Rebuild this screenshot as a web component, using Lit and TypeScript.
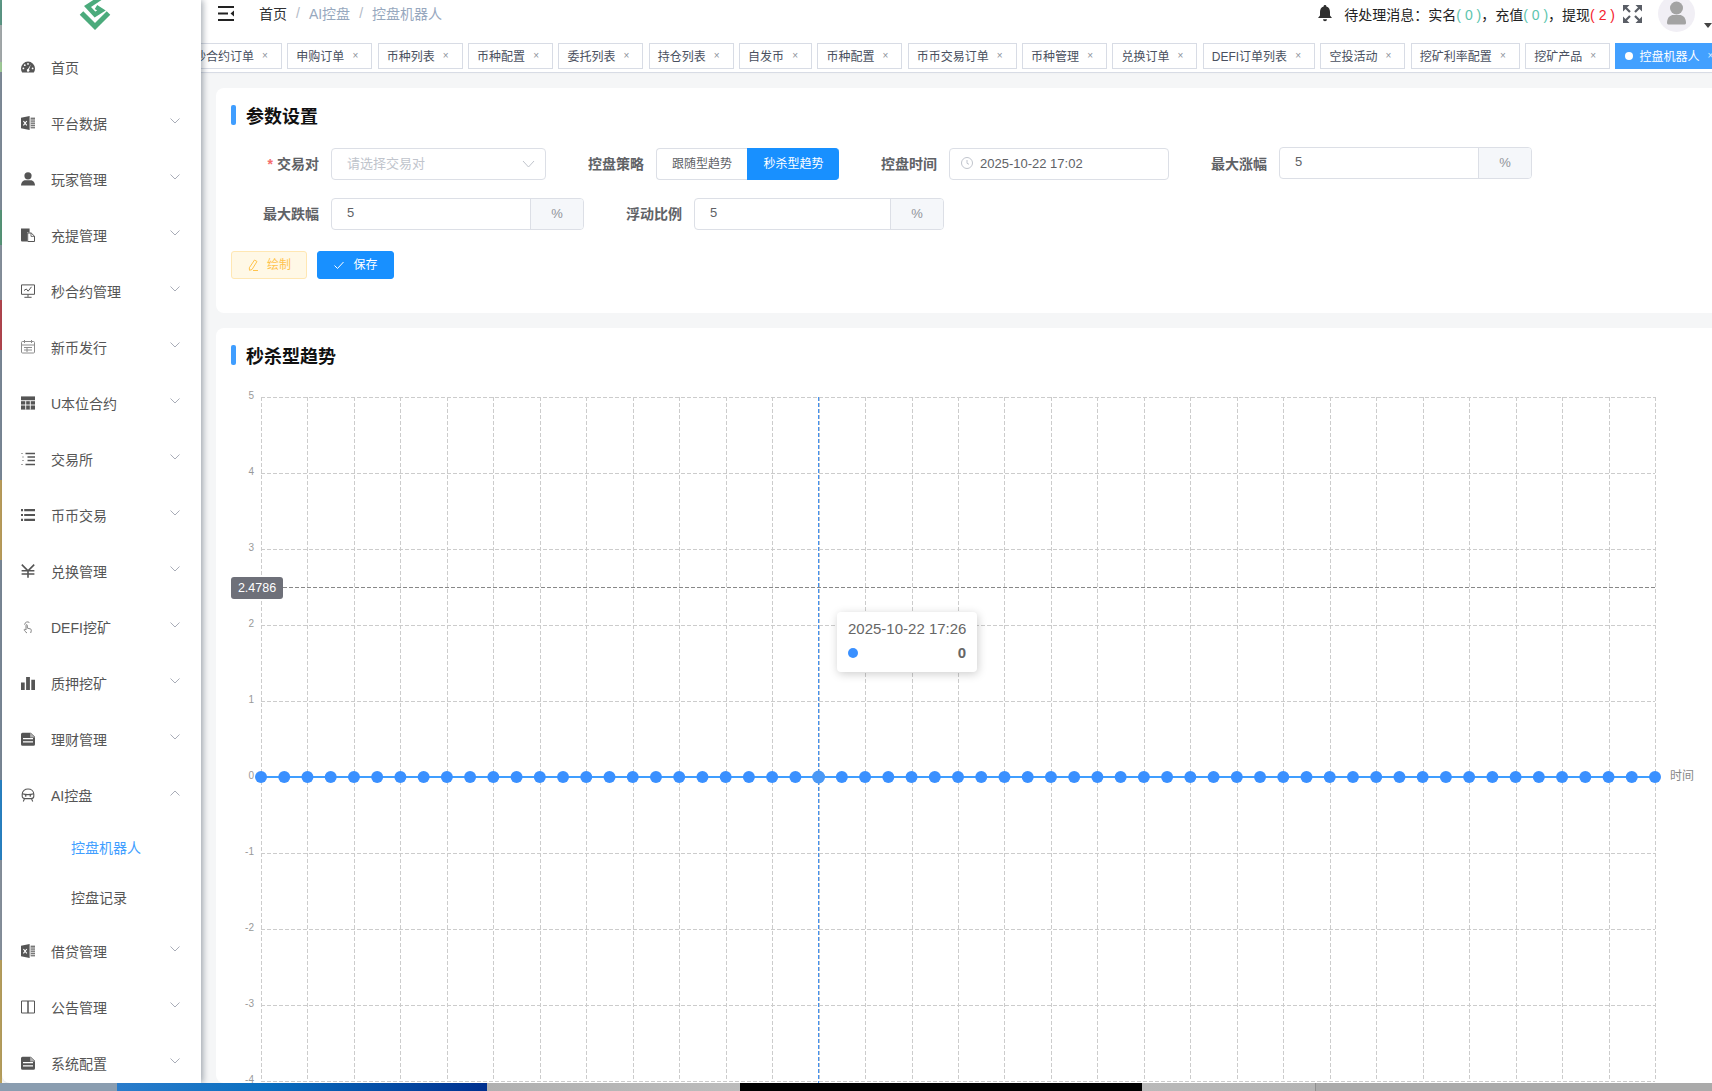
import { LitElement, html, css, svg } from "lit";
import { customElement } from "lit/decorators.js";

const ICONS: Record<string, unknown> = {
  gauge: svg`<path d="M7 1.600a7 7 0 0 0-7 7c0 1.500.4 2.900 1.200 4h11.600c.8-1.100 1.200-2.500 1.200-4a7 7 0 0 0-7-7z"/><g fill="#fff"><circle cx="2.400" cy="8.400" r=".9"/><circle cx="3.800" cy="5.200" r=".9"/><circle cx="7" cy="3.900" r=".9"/><circle cx="11.600" cy="8.400" r=".9"/><path d="M9.900 4.600 8 9.400a1.300 1.300 0 1 1-1.100-.3z"/></g>`,
  excel: svg`<path d="M0 1.800 8.600 0v14L0 12.200z"/><path d="m2.400 5 3.400 4.400M5.800 5 2.400 9.400" stroke="#fff" stroke-width="1.100" fill="none"/><path d="M9.600 1.600H14v10.800H9.600z" fill="#777"/><path d="M9.600 4h4.400M9.600 6.200h4.400M9.600 8.400h4.400M9.600 10.600h4.400" stroke="#fff" stroke-width=".7"/>`,
  user: svg`<circle cx="7" cy="3.800" r="3.600"/><path d="M0 13.600c0-3.600 2.600-5.400 4.400-5.400h5.200c1.800 0 4.400 1.800 4.400 5.400z"/>`,
  copy: svg`<path d="M0 .4h8.600v4H6v9H1a1 1 0 0 1-1-1z"/><path d="M6.700 5h3.500l3.300 3.200v5.300H6.700z" fill="#fff" stroke="#555"/><path d="M10 5v3.400h3.500" fill="none" stroke="#555" stroke-width=".8"/>`,
  monitor: svg`<g fill="none" stroke="#555"><path d="M.5.900h13v9.400H.5z"/><path d="m3 6.500 2.300-1.500 1.800 2.200 3.400-4.400M7 10.500v2.400M3.400 13.300h7.200"/></g>`,
  calendar: svg`<g fill="none" stroke="#8c8c8c"><rect x=".5" y="1.500" width="13" height="11.500" rx="1"/><path d="M.5 5h13M3.500 0v3M10.500 0v3M3 7.500h8M3 10h8M6 7v5"/></g>`,
  table: svg`<path d="M0 .4h14v13.200H0z"/><path d="M0 4.700h14M0 9h14M4.700 4.700v9M9.300 4.700v9" stroke="#fff" stroke-width=".9"/>`,
  indent: svg`<g fill="none" stroke="#555"><path d="M4.500 1.500H14M6.500 5h7.500M6.500 8.500h7.500M4.500 12.500H14" stroke-width="1.300"/><path d="M.5 1.500h1.500M1.500 5h2M1.500 8.500h2M.5 12.500h1.500" stroke-dasharray="1 1"/></g>`,
  list: svg`<path d="M0 1h2v2.200H0zM0 5.900h2v2.200H0zM0 10.800h2V13H0zM3.200 1H14v2.200H3.200zM3.200 5.900H14v2.200H3.200zM3.200 10.800H14V13H3.200z"/>`,
  yen: svg`<path d="M.8.600 7 6.800 13.200.600M.6 6.800h12.800M.6 10h12.800M7 6.800v7" fill="none" stroke="#555" stroke-width="1.600"/>`,
  hand: svg`<path d="M6 13c-1.400-1-3-2.600-2.800-3.300.2-.8 1.300-.2 1.800.3V5.400c0-1 1.300-1 1.300 0v2.700l3.300.9c.8.3.8 1.200.6 2l-.5 2M3.600 4.700a3 3 0 0 1 4.800-2.200" fill="none" stroke="#777" stroke-width=".9"/>`,
  bars: svg`<path d="M0 6.500h3.700V14H0zM5.100 1h3.800v13H5.100zM10.300 3.800H14V14h-3.700z"/>`,
  doc: svg`<path d="M1.500.800h8.300L14 4.800v7.400a1.500 1.500 0 0 1-1.500 1.500h-11A1.500 1.500 0 0 1 0 12.200V2.300A1.500 1.500 0 0 1 1.500.800z"/><path d="M2 6.600h10M2 9.800h10" stroke="#fff" stroke-width="1.200"/><path d="M9.200.800 14 5.400H9.200z" fill="#fff" opacity=".55"/>`,
  robot: svg`<g fill="none" stroke="#555" stroke-width="1.100"><path d="M1.200 6.300C1.200 2.800 4 1 7 1s5.800 1.800 5.800 5.300v2c0 1.600-1.500 2.300-2.800 2.300H4c-1.300 0-2.800-.7-2.800-2.300z"/><path d="M1.200 5.800c3.500 1 8.100 1 11.600 0M3.500 10.600 2.300 13.500M10.500 10.600l1.200 2.900"/></g><circle cx="4.700" cy="7.800" r=".9"/><circle cx="9.300" cy="7.800" r=".9"/>`,
  book: svg`<path d="M.5 1H7v12H.5zM7 1h6.500v12H7z" fill="none" stroke="#555"/>`,
};

const NAV = [
  { label: "首页", icon: "gauge", leaf: true },
  { label: "平台数据", icon: "excel" },
  { label: "玩家管理", icon: "user" },
  { label: "充提管理", icon: "copy" },
  { label: "秒合约管理", icon: "monitor" },
  { label: "新币发行", icon: "calendar" },
  { label: "U本位合约", icon: "table" },
  { label: "交易所", icon: "indent" },
  { label: "币币交易", icon: "list" },
  { label: "兑换管理", icon: "yen" },
  { label: "DEFI挖矿", icon: "hand" },
  { label: "质押挖矿", icon: "bars" },
  { label: "理财管理", icon: "doc" },
  { label: "AI控盘", icon: "robot", open: true },
  { label: "借贷管理", icon: "excel" },
  { label: "公告管理", icon: "book" },
  { label: "系统配置", icon: "doc" },
];

const TAGS = [
  "秒合约订单", "申购订单", "币种列表", "币种配置", "委托列表", "持仓列表", "自发币", "币种配置",
  "币币交易订单", "币种管理", "兑换订单", "DEFI订单列表", "空投活动", "挖矿利率配置", "挖矿产品",
];

// chart geometry, in page coordinates (the svg viewBox starts at the same place)
const X0 = 261;
const STEP = 1394 / 60;
const Y_ZERO = 777;
const UNIT = 76;
const xAt = (i: number) => X0 + i * STEP;
const yAt = (v: number) => Y_ZERO - v * UNIT;
const TICKS = [5, 4, 3, 2, 1, 0, -1, -2, -3, -4];
const HOVER = 24;

@customElement("app-root")
export class AppRoot extends LitElement {
  static styles = css`
    :host {
      display: block;
      width: 1712px;
      height: 1091px;
      overflow: hidden;
      font-family: "Liberation Sans", "Noto Sans CJK SC", sans-serif;
      font-size: 14px;
      color: #555;
    }
    .window { display: flex; height: 1083px; overflow: hidden; }
    .edge {
      width: 2px;
      flex: none;
      background: linear-gradient(#5f9c88 0 25px, #aab0b0 25px 62px, #a6d29c 62px 72px, #84909c 72px 210px,
        #5a9a7a 210px 245px, #8b95a0 245px 300px, #b8474f 300px 350px, #7e8c9a 350px 480px,
        #c0a25c 480px 560px, #7e8c9a 560px 780px, #2a86c8 780px 860px, #8b95a0 860px 960px, #bda45e 960px 1083px);
    }
    .side {
      width: 199px;
      flex: none;
      background: #fff;
      border-bottom-left-radius: 8px;
      box-shadow: 2px 0 6px rgba(0, 21, 41, 0.35);
      position: relative;
      z-index: 2;
      overflow: hidden;
    }
    .logo { height: 39px; display: flex; justify-content: center; padding-right: 14px; box-sizing: border-box; }
    .item { height: 56px; display: flex; align-items: center; padding: 0 21px 0 19px; color: #555; }
    .item .ico { width: 14px; height: 14px; fill: #555; flex: none; margin-right: 16px; margin-top: -1px; }
    .item .name { flex: 1; white-space: nowrap; }
    .item .chev { width: 10px; height: 6px; flex: none; margin-top: -4px; fill: none; stroke: #a9adb8; stroke-width: 1; }
    .sub { height: 50px; line-height: 50px; padding-left: 69px; color: #555; }
    .sub.on { color: #409eff; }

    .main { flex: 1; min-width: 0; display: flex; flex-direction: column; background: #f5f6f7; overflow: hidden; }
    .head {
      height: 39px;
      flex: none;
      background: #fff;
      display: flex;
      align-items: center;
      position: relative;
      padding-left: 17px;
      padding-bottom: 11px;
      box-sizing: border-box;
      overflow: hidden;
    }
    .burger { width: 16px; height: 15px; flex: none; margin: -2px 25px 0 0; }
    .crumb { color: #97a8be; white-space: nowrap; margin-top: -2px; }
    .crumb.first { color: #303133; }
    .slash { color: #b3bac6; margin: -2px 9px 0; }
    .right { margin-left: auto; display: flex; align-items: center; padding-top: 3px; }
    .bell { width: 16px; height: 17px; fill: #2f2f2f; margin-right: 11px; margin-top: -5px; }
    .msg { color: #222; white-space: nowrap; margin-top: -4px; }
    .msg .ok { color: #5cc5ae; }
    .msg .bad { color: #f5222d; }
    .full { width: 19px; height: 18px; fill: #5a5e66; margin: -3px 0 0 8px; }
    .avatar {
      width: 37px;
      height: 37px;
      margin: -4px 17px 0 16px;
      display: block;
    }
    .caret {
      position: absolute;
      right: 0;
      top: 23px;
      width: 0;
      height: 0;
      border: 4px solid transparent;
      border-top: 5px solid #444;
      border-bottom: 0;
    }
    .tags {
      height: 34px;
      flex: none;
      background: #fff;
      border-bottom: 1px solid #d8dce5;
      box-shadow: 0 -1px 3px rgba(0, 0, 0, 0.08);
      display: flex;
      align-items: center;
      gap: 5.33px;
      overflow: hidden;
      box-sizing: border-box;
      padding-top: 1px;
    }
    .tag {
      height: 26px;
      flex: none;
      box-sizing: border-box;
      border: 1px solid #d8dce5;
      display: flex;
      align-items: center;
      padding: 0 8px 1px;
      font-size: 12px;
      color: #495060;
      white-space: nowrap;
      background: #fff;
    }
    .tag:first-child { margin-left: -16px; }
    .tag .x { width: 16px; margin-left: 3px; text-align: center; color: #8e939c; font-size: 10px; }
    .tag.on { background: #42a0ff; border-color: #42a0ff; color: #fff; padding-left: 9px; }
    .tag.on .dot { width: 8px; height: 8px; border-radius: 50%; background: #fff; margin-right: 6px; }
    .tag.on .x { color: #dcecff; }

    .content { flex: 1; padding: 15px 0 0 15px; display: flex; flex-direction: column; gap: 15px; min-height: 0; }
    .card { background: #fff; border-radius: 8px 0 0 8px; padding: 17px 0 0 15px; flex: none; position: relative; }
    .card.form { height: 225px; box-sizing: border-box; }
    .title { height: 20px; display: flex; align-items: center; gap: 10px; font-size: 18px; font-weight: 700; color: #111; }
    .title::before { content: ""; width: 5px; height: 20px; border-radius: 2px; background: #409eff; }
    .row { display: flex; align-items: flex-start; gap: 10px; height: 32px; }
    .row.first { margin-top: 23px; margin-bottom: 18px; }
    .field { display: flex; align-items: flex-start; flex: none; }
    .lbl {
      width: 88px;
      padding-right: 12px;
      text-align: right;
      line-height: 32px;
      font-weight: 700;
      color: #606266;
      white-space: nowrap;
    }
    .star { color: #f56c6c; margin-right: 4px; }
    .box {
      height: 32px;
      box-sizing: border-box;
      border: 1px solid #dcdfe6;
      border-radius: 4px;
      display: flex;
      align-items: center;
      padding: 0 15px 2px;
      font-size: 13px;
      color: #606266;
      background: #fff;
    }
    .select { width: 215px; color: #c0c4cc; justify-content: space-between; padding: 0 10px 4px 15px; }
    .select svg { width: 13px; height: 8px; fill: none; stroke: #c0c4cc; margin-top: 4px; }
    .date { width: 220px; padding-left: 11px; gap: 7px; }
    .date svg { width: 12px; height: 12px; fill: none; stroke: #c0c4cc; flex: none; }
    .group { display: flex; height: 32px; box-sizing: border-box; border: 1px solid #dcdfe6; border-radius: 4px; overflow: hidden; font-size: 13px; color: #606266; }
    .group.up { margin-top: -1px; }
    .group .val { flex: 1; padding-left: 15px; line-height: 28px; }
    .group .unit { width: 52px; border-left: 1px solid #dcdfe6; background: #f5f7fa; color: #909399; text-align: center; line-height: 30px; }
    .radio { display: flex; width: 183px; height: 32px; font-size: 12px; }
    .radio span { flex: none; width: 91px; box-sizing: border-box; text-align: center; line-height: 30px; border: 1px solid #dcdfe6; color: #606266; border-radius: 4px 0 0 4px; border-right: 0; }
    .radio span.on { width: 92px; background: #1890ff; border-color: #1890ff; color: #fff; border-radius: 0 4px 4px 0; }
    .btns { display: flex; gap: 10px; margin-top: 21px; }
    .btn { height: 28px; box-sizing: border-box; border-radius: 3px; font-size: 12px; display: flex; align-items: center; justify-content: center; gap: 8px; border: 1px solid; padding-bottom: 3px; }
    .btn svg { width: 12px; height: 12px; fill: none; margin-top: 3px; }
    .btn.draw { width: 76px; background: #fff8e6; border-color: #ffe7b3; color: #ffc34d; }
    .btn.draw svg { stroke: #ffc34d; }
    .btn.save { width: 77px; background: #1890ff; border-color: #1890ff; color: #fff; }
    .btn.save svg { stroke: #fff; }

    .chart { display: block; width: 1496px; height: 703px; margin: 15px 0 0 -15px; }
    .chart text { font-family: "Liberation Sans", "Noto Sans CJK SC", sans-serif; }
    .tip {
      position: absolute;
      left: 621px;
      top: 284px;
      width: 140px;
      height: 60px;
      box-sizing: border-box;
      background: #fff;
      border-radius: 4px;
      box-shadow: 1px 2px 10px rgba(0, 0, 0, 0.2);
      padding: 8px 11px;
      color: #666;
      font-size: 15px;
      line-height: 18px;
      white-space: nowrap;
    }
    .tip .v { display: flex; align-items: center; justify-content: space-between; margin-top: 6px; font-weight: 700; }
    .tip .v i { width: 10px; height: 10px; border-radius: 50%; background: #3a90ff; }

    .taskbar { height: 8px; display: flex; }
    .taskbar div { height: 100%; }
    .t1 { width: 117px; background: #8a9db0; }
    .t2 { width: 370px; background: linear-gradient(90deg, #2a7ccb, #0a6fc0 40%, #00308f); }
    .t3 { width: 253px; background: linear-gradient(90deg, #b0b0b0, #bcbcbc); }
    .t4 { width: 402px; background: #000; }
    .t5 { width: 173px; background: linear-gradient(90deg, #b9b9b9, #b4b4b4); }
    .t6 { flex: 1; background: #aaaaaa; border-left: 1px solid #8f8f8f; }
  `;

  private renderNav(n: (typeof NAV)[number]) {
    return html`<div class="item">
      <svg class="ico" viewBox="0 0 14 14">${ICONS[n.icon]}</svg>
      <span class="name">${n.label}</span>
      ${n.leaf
        ? ""
        : html`<svg class="chev" viewBox="0 0 10 6"><path d=${n.open ? "M.5 5.500 5 1l4.500 4.500" : "M.5.500 5 5l4.500-4.500"}></path></svg>`}
    </div>`;
  }

  private renderChart() {
    const vertical = [];
    for (let i = 0; i <= 60; i += 2) vertical.push(xAt(i));
    const dots = [];
    for (let i = 0; i <= 60; i++) dots.push(i);
    return html`<svg class="chart" viewBox="216 380 1496 703">
      <g stroke="#ccc" stroke-dasharray="4 2" fill="none">
        ${TICKS.map((t) => svg`<path d="M${X0} ${yAt(t) + 0.5}H1655"></path>`)}
        ${vertical.map((x) => svg`<path d="M${Math.round(x) + 0.5} 397V1081"></path>`)}
      </g>
      <g fill="#999" font-size="10" text-anchor="end">
        ${TICKS.map((t) => svg`<text x="254" y=${yAt(t) + 1.500}>${t}</text>`)}
      </g>
      <path d="M283 587.500H1655" stroke="#888" stroke-dasharray="4 2"></path>
      <path d=${`M${xAt(HOVER)} 397V1083`} stroke="#2f86f0" stroke-dasharray="4 2"></path>
      <path d=${`M${X0} ${Y_ZERO}H1655`} stroke="#409eff" stroke-width="2"></path>
      ${dots.map((i) => svg`<circle cx=${xAt(i)} cy=${Y_ZERO} r=${i === HOVER ? 6.500 : 6} fill=${i === HOVER ? "#4a98f5" : "#3a90ff"}></circle>`)}
      <rect x="231" y="577" width="52" height="22" rx="3" fill="#6e7079"></rect>
      <text x="257" y="592" fill="#fff" font-size="12.500" text-anchor="middle">2.4786</text>
      <text x="1670" y="780" fill="#888" font-size="12">时间</text>
    </svg>`;
  }

  render() {
    const before = NAV.slice(0, 14);
    const after = NAV.slice(14);
    return html`
      <div class="window">
        <div class="edge"></div>
        <aside class="side">
          <div class="logo">
            <svg width="34" height="32" viewBox="78 0 34 32">
              <path d="M81.500 13 95 26.500 108.500 13" fill="none" stroke="#4bab7c" stroke-width="5"></path>
              <path d="M102 -3 87.500 6.500 95 14.500 101.500 10.500 96 7" fill="none" stroke="#4bab7c" stroke-width="4.500"></path>
            </svg>
          </div>
          ${before.map((n) => this.renderNav(n))}
          <div class="sub on">控盘机器人</div>
          <div class="sub">控盘记录</div>
          ${after.map((n) => this.renderNav(n))}
        </aside>
        <div class="main">
          <header class="head">
            <svg class="burger" viewBox="0 0 16 15">
              <path d="M0 1h16M0 7.500h10M0 14h16" stroke="#222" stroke-width="1.800"></path>
              <path d="M16 4.500v6l-3.500-3z" fill="#222"></path>
            </svg>
            <span class="crumb first">首页</span><span class="slash">/</span>
            <span class="crumb">AI控盘</span><span class="slash">/</span>
            <span class="crumb">控盘机器人</span>
            <div class="right">
              <svg class="bell" viewBox="0 0 16 17">
                <path d="M8 0a1.300 1.300 0 0 1 1.300 1.500C12 2.200 13 4.500 13 7v3.500l2 2.500H1l2-2.500V7c0-2.500 1-4.800 3.700-5.500A1.300 1.300 0 0 1 8 0zM6 14.200h4a2 2 0 0 1-4 0z"></path>
              </svg>
              <span class="msg">待处理消息：实名<span class="ok">( 0 )</span>，充值<span class="ok">( 0 )</span>，提现<span class="bad">( 2 )</span></span>
              <svg class="full" viewBox="0 0 19 18">
                <path d="M0 0h6.500L0 6.500zM19 0v6.500L12.500 0zM0 18v-6.500L6.500 18zM19 18h-6.500l6.500-6.500z"></path>
                <path d="m2.500 2.500 4.500 4.500M16.500 2.500 12 7M2.500 15.500 7 11M16.500 15.500 12 11" stroke="#5a5e66" stroke-width="2.200"></path>
              </svg>
              <svg class="avatar" viewBox="0 0 37 37">
                <circle cx="18.500" cy="18.500" r="18.500" fill="#f1eff5"></circle>
                <circle cx="18.500" cy="13" r="6.500" fill="#a3a3a3"></circle>
                <path d="M9 28c0-6 4-8 6-8h7c2 0 6 2 6 8 0 1-1 1.500-2 1.500H11c-1 0-2-.5-2-1.500z" fill="#a3a3a3"></path>
              </svg>
            </div>
            <span class="caret"></span>
          </header>
          <nav class="tags">
            ${TAGS.map((t) => html`<div class="tag">${t}<span class="x">×</span></div>`)}
            <div class="tag on"><span class="dot"></span>控盘机器人<span class="x">×</span></div>
          </nav>
          <div class="content">
            <section class="card form">
              <div class="title">参数设置</div>
              <div class="row first">
                <div class="field">
                  <div class="lbl"><span class="star">*</span>交易对</div>
                  <div class="box select">
                    请选择交易对
                    <svg viewBox="0 0 13 8"><path d="m1 1 5.500 6L12 1"></path></svg>
                  </div>
                </div>
                <div class="field">
                  <div class="lbl">控盘策略</div>
                  <div class="radio"><span>跟随型趋势</span><span class="on">秒杀型趋势</span></div>
                </div>
                <div class="field">
                  <div class="lbl">控盘时间</div>
                  <div class="box date">
                    <svg viewBox="0 0 12 12"><circle cx="6" cy="6" r="5.500"></circle><path d="M6 3v3.300l2 1"></path></svg>
                    2025-10-22 17:02
                  </div>
                </div>
                <div class="field">
                  <div class="lbl">最大涨幅</div>
                  <div class="group up" style="width:253px"><div class="val">5</div><div class="unit">%</div></div>
                </div>
              </div>
              <div class="row">
                <div class="field">
                  <div class="lbl">最大跌幅</div>
                  <div class="group" style="width:253px"><div class="val">5</div><div class="unit">%</div></div>
                </div>
                <div class="field">
                  <div class="lbl">浮动比例</div>
                  <div class="group" style="width:250px"><div class="val">5</div><div class="unit">%</div></div>
                </div>
              </div>
              <div class="btns">
                <div class="btn draw">
                  <svg viewBox="0 0 12 12"><path d="M7.500 1 10 2.500 5 10.500l-2.500.8-.2-2.500zM6 11.500h5"></path></svg>绘制
                </div>
                <div class="btn save">
                  <svg viewBox="0 0 12 12"><path d="m1.500 6.500 3 3L10.500 3"></path></svg>保存
                </div>
              </div>
            </section>
            <section class="card">
              <div class="title">秒杀型趋势</div>
              ${this.renderChart()}
              <div class="tip">
                2025-10-22 17:26
                <div class="v"><i></i>0</div>
              </div>
            </section>
          </div>
        </div>
      </div>
      <div class="taskbar">
        <div class="t1"></div><div class="t2"></div><div class="t3"></div>
        <div class="t4"></div><div class="t5"></div><div class="t6"></div>
      </div>
    `;
  }
}
